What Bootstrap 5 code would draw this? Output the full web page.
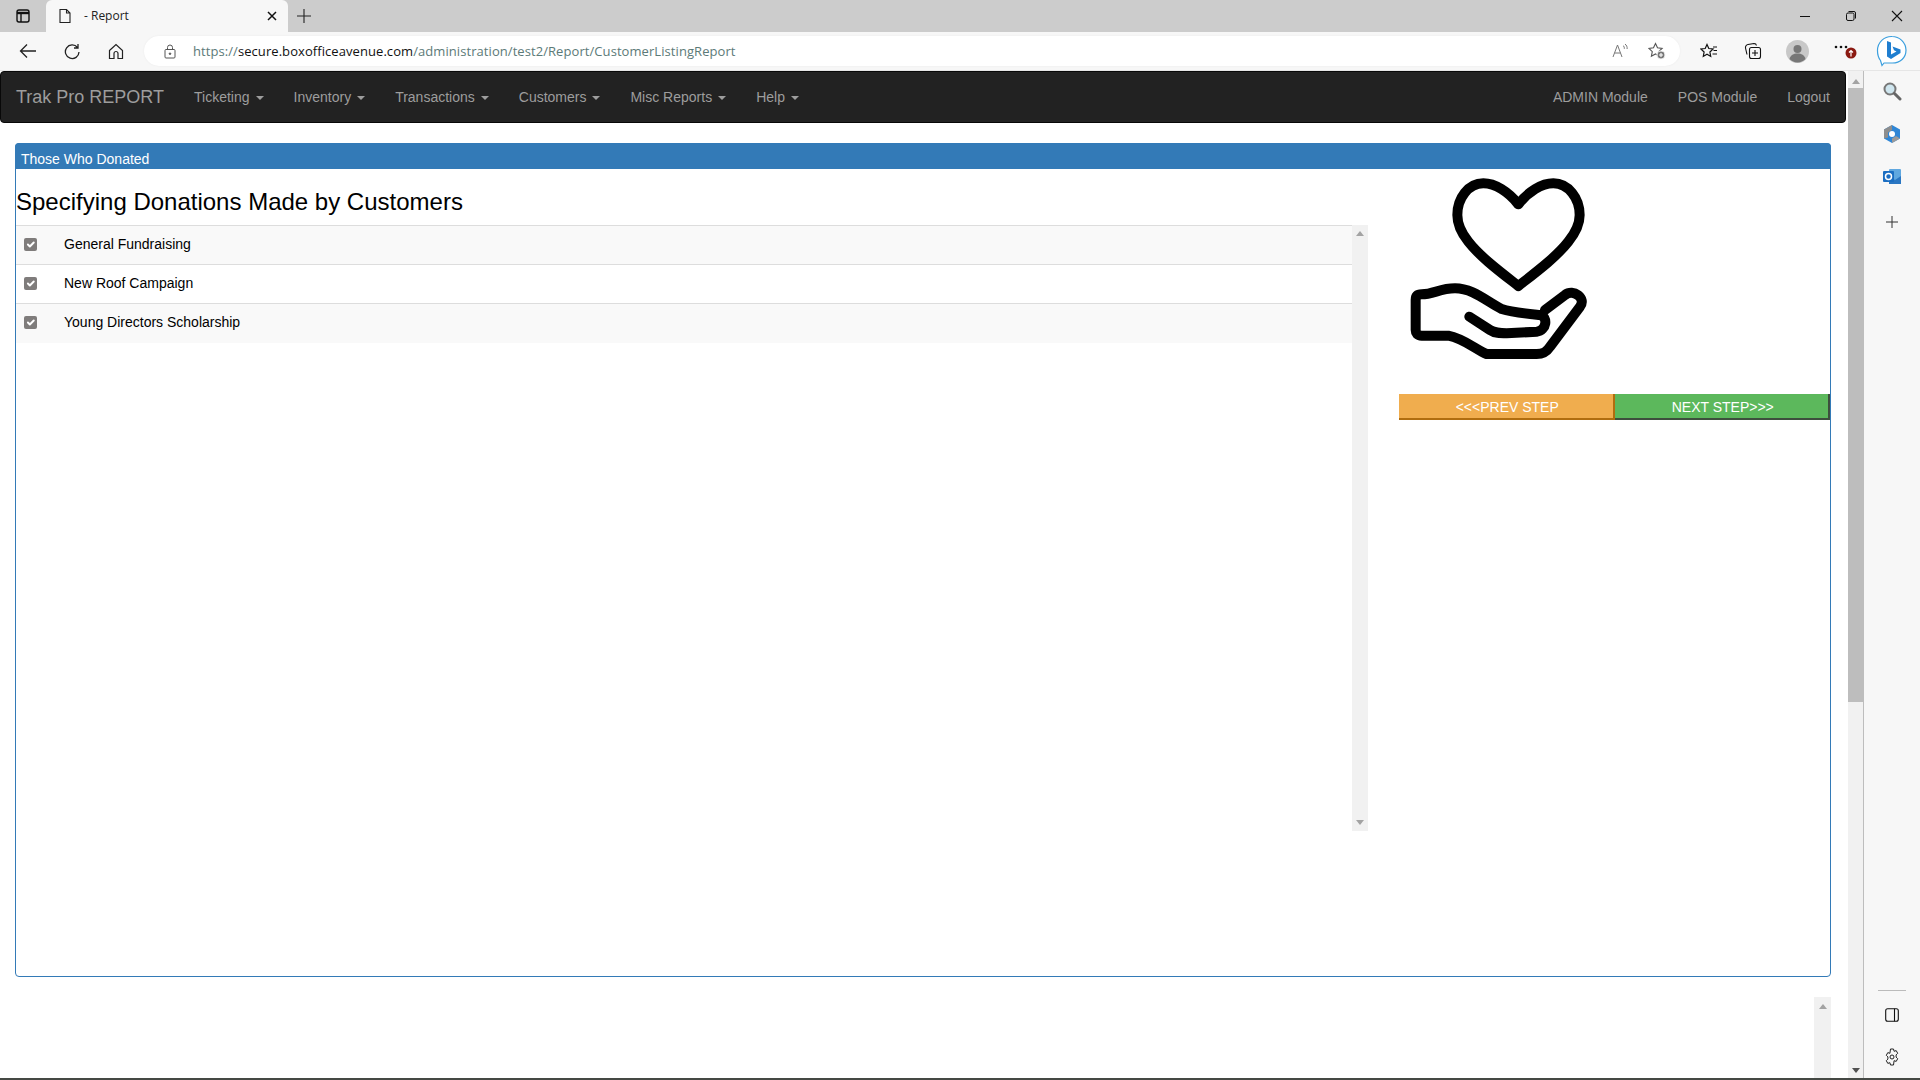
<!DOCTYPE html>
<html lang="en">
<head>
<meta charset="utf-8">
<title>- Report</title>
<link rel="stylesheet" href="https://cdn.jsdelivr.net/npm/bootstrap@5.3.0/dist/css/bootstrap.min.css">
<style>
html,body{height:100%;overflow:hidden;background:#fff}
body{font-family:"Liberation Sans",Arial,sans-serif;font-size:14px;color:#000;display:flex;flex-direction:column;height:1080px}
.chrome-font{font-family:"Open Sans","Noto Sans",sans-serif}
.titlebar{height:32px;background:#ccc;flex:none;display:flex;align-items:stretch}
.tabside{width:46px;display:flex;align-items:center;justify-content:center;flex:none}
.tabitem{width:242px;background:#f7f7f7;border-radius:6px 6px 0 0;display:flex;align-items:center;padding:0 11px 0 13px;font-size:12px;color:#222;flex:none}
.tabitem .tabname{margin-left:13px;flex:1}
.newtab{width:32px;display:flex;align-items:center;justify-content:center;flex:none}
.winbtn{width:46px;display:flex;align-items:center;justify-content:center;flex:none}
.winbtns{margin-left:auto;display:flex;padding-right:0}
.toolbar{height:39px;background:#f7f7f7;flex:none;display:flex;align-items:center;padding-left:6px;position:relative;border-bottom:1px solid #e6e6e6}
.tbtn{width:44px;height:30px;display:flex;align-items:center;justify-content:center;flex:none}
.urlbar{width:1536px;height:30px;margin-left:6px;background:#fff;border-radius:15px;display:flex;align-items:center;padding-left:20px;flex:none;box-shadow:0 0 2px #e9e9e9}
.urltext{margin-left:17px;padding-top:1px;font-size:13px;color:#5c7a78;white-space:nowrap;letter-spacing:.07px}
.urltext b{font-weight:400;color:#111}
.urlicons{margin-left:auto;display:flex;padding-right:5px}
.urlicons .tbtn{width:36px}
.righttools{display:flex;align-items:center;margin-left:7px}
.morebtn{margin-left:4px}
.bingbtn{margin-left:3px}
.bodyrow{flex:1;display:flex;min-height:0}
.pagearea{width:1848px;flex:none;display:flex;flex-direction:column;min-height:0}
.topnav{height:52px;margin-right:2px;background:#222;border:1px solid #080808;border-radius:4px;padding:0;flex:none}
.topnav .navbar-brand{font-size:18px;color:#9d9d9d;padding:0;margin:0 15px;line-height:20px}
.topnav.navbar-expand .navbar-nav .nav-link{color:#9d9d9d;font-size:14px;padding:15px;line-height:20px}
.topnav .dropdown-toggle::after{margin-left:6px;vertical-align:2px;border-top-width:4px;border-left-width:4px;border-right-width:4px}
.stepcard{margin:20px 17px 0 15px;height:834px;border:1px solid #337ab7;border-radius:4px;flex:none;display:flex;flex-direction:column;--bs-card-bg:#fff}
.stephead{background:#337ab7;color:#fff;height:26px;line-height:33px;padding-left:6px;margin:-1px -1px 0;border-radius:4px 4px 0 0;flex:none;font-size:14px;overflow:hidden}
.stepbody{flex:1;display:flex;min-height:0}
.leftcol{width:1352px;flex:none}
.stephead,.sheading,.gridrow{font-family:"Liberation Sans",Arial,sans-serif}
.sheading{font-size:24px;font-weight:400;line-height:26px;margin:20px 0 10px 0;color:#000;height:26px}
.gridwrap{display:flex;height:606px}
.gridtable{flex:1;margin:0;align-self:flex-start;--bs-table-bg:transparent;--bs-table-striped-bg:#f9f9f9;--bs-table-striped-color:#000}
.gridtable td{height:39px;padding:0 0 2px 0;border-top:1px solid #ddd;border-bottom:0;vertical-align:middle;font-size:14px;color:#000}
.checkcell{width:48px;padding-left:8px!important}
.gridtable td.checkcell .form-check-input{width:13px;height:13px;margin:0;display:block;background-color:#7f7c7b;border:0;border-radius:2px;box-shadow:none;background-size:13px}
.gridscroll{width:16px;background:#f1f1f1;flex:none;display:flex;flex-direction:column;justify-content:space-between;align-items:center;padding:6px 0}
.rightcol{flex:1;padding-left:31px;min-width:0}
.handicon{display:block;width:204px;height:200px}
.stepbtns{display:flex;margin-top:25px;height:26px}
.stepbtn{flex:1;border:0;border-radius:0;height:26px;padding:1px 0 0 3px;font-size:14px;line-height:24px;color:#fff;--bs-btn-color:#fff;--bs-btn-hover-color:#fff;--bs-btn-padding-y:0}
.stepprev{background:#f0ad4e;border-bottom:2px solid #b06d0f;border-right:2px solid #b06d0f}
.stepnext{background:#5cb85c;border-bottom:2px solid #3d4f3d;border-right:2px solid #3d4f3d}
.lowerstrip{flex:1;display:flex;justify-content:flex-end;padding:20px 17px 0 0;min-height:0}
.lowerscroll{width:17px;background:#f1f1f1;display:flex;justify-content:center;padding-top:7px}
.upar{width:0;height:0;border-left:4px solid transparent;border-right:4px solid transparent;border-bottom:5px solid #a3a3a3}
.dnar{width:0;height:0;border-left:4px solid transparent;border-right:4px solid transparent;border-top:5px solid #a3a3a3}
.mainscroll{width:16px;background:#f1f1f1;flex:none;display:flex;flex-direction:column;align-items:center;border-right:1px solid #bdbdbd;padding-top:8px}
.mainthumb{width:15px;height:614px;background:#bdbdbd;margin-top:4px}
.dnar.dark{margin-top:auto;margin-bottom:5px;border-top-color:#505050}
.sidebar{flex:1;background:#f7f7f7;display:flex;flex-direction:column;align-items:center;min-width:0}
.sidebtn{height:42.5px;width:100%;display:flex;align-items:center;justify-content:center;flex:none}
.sidefirst{margin-top:-1px}
.sideplus{margin-top:3px}
.sidedivider{width:28px;height:1px;background:#bbb;margin-top:auto;margin-bottom:3px}
.sidelast{margin-top:-1px}
.footline{height:2px;background:#454944;flex:none}
</style>
</head>
<body>
<div class="titlebar chrome-font">
  <div class="tabside">
    <svg width="16" height="16" viewBox="0 0 16 16" fill="none" stroke="#111" stroke-width="1.4"><rect x="2" y="2" width="12" height="12" rx="2"/><path d="M2 5h12" stroke-width="2.4"/><path d="M6 5v9"/></svg>
  </div>
  <div class="tabitem">
    <svg width="12" height="16" viewBox="0 0 12 16" fill="none" stroke="#222" stroke-width="1.1"><path d="M1 1.5h6.5L11 5v9.5H1zM7.500 1.500V5H11"/></svg>
    <span class="tabname">- Report</span>
    <svg width="10" height="10" viewBox="0 0 10 10" stroke="#111" stroke-width="1.500"><path d="M1 1l8 8M9 1l-8 8"/></svg>
  </div>
  <div class="newtab">
    <svg width="16" height="16" viewBox="0 0 16 16" stroke="#222" stroke-width="1.100"><path d="M8 1v14M1 8h14"/></svg>
  </div>
  <div class="winbtns">
    <div class="winbtn"><svg width="12" height="12" viewBox="0 0 12 12" stroke="#111"><path d="M1 6.500h10"/></svg></div>
    <div class="winbtn"><svg width="12" height="12" viewBox="0 0 12 12" fill="none" stroke="#111"><rect x="1.500" y="3" width="7.500" height="7.500" rx="1.500"/><path d="M3.500 1.500H9A1.500 1.500 0 0 1 10.500 3v5.500"/></svg></div>
    <div class="winbtn"><svg width="12" height="12" viewBox="0 0 12 12" stroke="#111" stroke-width="1.100"><path d="M1 1l10 10M11 1L1 11"/></svg></div>
  </div>
</div>
<div class="toolbar chrome-font">
  <div class="tbtn"><svg width="18" height="16" viewBox="0 0 18 16" fill="none" stroke="#222" stroke-width="1.300"><path d="M17 8H1.500M8 1.500L1.500 8 8 14.500"/></svg></div>
  <div class="tbtn"><svg width="16" height="17" viewBox="0 0 16 17" fill="none" stroke="#222" stroke-width="1.300"><path d="M13.500 4.500A6.800 6.800 0 1 0 15 9M14 1v4h-4"/></svg></div>
  <div class="tbtn"><svg width="16" height="17" viewBox="0 0 16 17" fill="none" stroke="#222" stroke-width="1.200"><path d="M1.500 7.500L8 1.500l6.500 6V15.500h-4.500v-5a2 2 0 0 0-4 0v5H1.500z"/></svg></div>
  <div class="urlbar">
    <svg width="12" height="15" viewBox="0 0 12 15" fill="none" stroke="#555" stroke-width="1"><rect x="1" y="5.500" width="10" height="8.500" rx="1"/><path d="M3.500 5.500V3.500a2.500 2.500 0 0 1 5 0v2"/><circle cx="6" cy="9.700" r=".8" fill="#555"/></svg>
    <span class="urltext">https://<b>secure.boxofficeavenue.com</b>/administration/test2/Report/CustomerListingReport</span>
    <div class="urlicons">
      <div class="tbtn"><svg width="18" height="16" viewBox="0 0 18 16" fill="none" stroke="#777" stroke-width="1"><path d="M1 14L5.500 2 10 14M2.700 10h5.600"/><path d="M11 2.500c1 .7 1.500 2 1.300 3.300M13 1c1.600 1.200 2.400 3 2.100 5"/></svg></div>
      <div class="tbtn"><svg width="18" height="18" viewBox="0 0 18 18" fill="none" stroke="#555" stroke-width="1.100"><path d="M7.500 1.500l2 4.300 4.600.6-3.400 3.200.9 4.600-4.100-2.300-4.100 2.300.9-4.600L.9 6.400l4.600-.6z"/><circle cx="13" cy="13" r="4" fill="#777" stroke="#f7f7f7"/><path d="M13 11v4M11 13h4" stroke="#fff"/></svg></div>
    </div>
  </div>
  <div class="righttools">
    <div class="tbtn"><svg width="18" height="16" viewBox="0 0 18 16" fill="none" stroke="#111" stroke-width="1.200"><path d="M7 1.500l1.800 4 4.300.5-3.200 3 .8 4.400L7 11.200l-3.700 2.200.8-4.400-3.200-3 4.300-.5z"/><path d="M13 4h4M13.500 7.500H17M12.500 11H17"/></svg></div>
    <div class="tbtn"><svg width="18" height="18" viewBox="0 0 18 18" fill="none" stroke="#111" stroke-width="1.100"><rect x="5.500" y="5.500" width="11" height="11" rx="2"/><path d="M11 8v6M8 11h6"/><path d="M3 12.500L1.500 6A3 3 0 0 1 4 2.500l6-1a2.500 2.500 0 0 1 2.500 2"/></svg></div>
    <div class="tbtn"><svg width="23" height="23" viewBox="0 0 23 23"><circle cx="11.500" cy="11.500" r="11.500" fill="#c8c8c8"/><circle cx="11.500" cy="9" r="4" fill="#777"/><path d="M3.500 19c1-4 4-5.500 8-5.500s7 1.500 8 5.500a11 11 0 0 1-16 0z" fill="#777"/></svg></div>
    <div class="tbtn morebtn"><svg width="24" height="16" viewBox="0 0 24 16"><circle cx="3" cy="4" r="1.300" fill="#111"/><circle cx="8" cy="4" r="1.300" fill="#111"/><circle cx="13" cy="4" r="1.300" fill="#111"/><circle cx="18" cy="10" r="5.500" fill="#8b1a12"/><path d="M18 13.500V7.500M16 9.500l2-2 2 2" fill="none" stroke="#fff" stroke-width="1.200"/></svg></div>
    <div class="tbtn bingbtn"><svg width="32" height="32" viewBox="0 0 32 32"><path d="M16 1.500a14 14 0 0 1 14 13.500c0 8-6 13-13.500 13H8l-2 2.500-1.500-5C2.500 23 1.500 19.500 1.500 15.500A14 14 0 0 1 16 1.500z" fill="#fff" stroke="#3b9fde" stroke-width="1.200"/><path d="M11 6l4 1.500v12l5.500-3-2.500-1.200-1.500-3.800 8 3v3.500L15 24l-4-2.500z" fill="#1f7ed0"/></svg></div>
  </div>
</div>
<div class="bodyrow">
  <div class="pagearea">
    <nav class="navbar navbar-expand navbar-dark topnav">
      <a class="navbar-brand" href="#">Trak Pro REPORT</a>
      <ul class="navbar-nav me-auto">
        <li class="nav-item dropdown"><a class="nav-link dropdown-toggle" href="#">Ticketing</a></li>
        <li class="nav-item dropdown"><a class="nav-link dropdown-toggle" href="#">Inventory</a></li>
        <li class="nav-item dropdown"><a class="nav-link dropdown-toggle" href="#">Transactions</a></li>
        <li class="nav-item dropdown"><a class="nav-link dropdown-toggle" href="#">Customers</a></li>
        <li class="nav-item dropdown"><a class="nav-link dropdown-toggle" href="#">Misc Reports</a></li>
        <li class="nav-item dropdown"><a class="nav-link dropdown-toggle" href="#">Help</a></li>
      </ul>
      <ul class="navbar-nav">
        <li class="nav-item"><a class="nav-link" href="#">ADMIN Module</a></li>
        <li class="nav-item"><a class="nav-link" href="#">POS Module</a></li>
        <li class="nav-item"><a class="nav-link" href="#">Logout</a></li>
      </ul>
    </nav>
    <div class="card stepcard">
      <div class="stephead">Those Who Donated</div>
      <div class="stepbody">
        <div class="leftcol">
          <h3 class="sheading">Specifying Donations Made by Customers</h3>
          <div class="gridwrap">
            <table class="table table-striped gridtable">
              <tbody>
                <tr class="gridrow"><td class="checkcell"><input class="form-check-input" type="checkbox" checked aria-label="General Fundraising"></td><td>General Fundraising</td></tr>
                <tr class="gridrow"><td class="checkcell"><input class="form-check-input" type="checkbox" checked aria-label="New Roof Campaign"></td><td>New Roof Campaign</td></tr>
                <tr class="gridrow"><td class="checkcell"><input class="form-check-input" type="checkbox" checked aria-label="Young Directors Scholarship"></td><td>Young Directors Scholarship</td></tr>
              </tbody>
            </table>
            <div class="gridscroll"><span class="upar"></span><span class="dnar"></span></div>
          </div>
        </div>
        <div class="rightcol">
          <svg class="handicon" viewBox="57 27 612 600" fill="none" stroke="#000" stroke-width="30" stroke-linejoin="round" stroke-linecap="round" aria-hidden="true">
            <path d="M415 133C385 95 345 70 310 70C265 70 232 115 232 165C232 195 245 220 265 245C300 290 360 335 415 378C470 335 530 290 565 245C585 220 599 195 599 165C599 115 565 70 520 70C485 70 445 95 415 133Z"/>
            <path d="M495 450L555 405C580 385 620 415 600 440L510 560C500 575 490 582 470 582L320 582C290 570 250 535 205 527L125 527C112 527 107 520 107 510L107 420C107 408 112 403 125 403C160 403 180 385 225 385C280 385 320 425 365 447C400 458 450 462 480 465C505 470 500 512 470 515L380 520C360 520 345 520 330 510L268 470"/>
          </svg>
          <div class="stepbtns">
            <button type="button" class="btn stepbtn stepprev">&lt;&lt;&lt;PREV STEP</button>
            <button type="button" class="btn stepbtn stepnext">NEXT STEP&gt;&gt;&gt;</button>
          </div>
        </div>
      </div>
    </div>
    <div class="lowerstrip"><div class="lowerscroll"><span class="upar"></span></div></div>
  </div>
  <div class="mainscroll">
    <span class="upar"></span>
    <div class="mainthumb"></div>
    <span class="dnar dark"></span>
  </div>
  <div class="sidebar">
    <div class="sidebtn sidefirst"><svg width="20" height="20" viewBox="0 0 20 20" fill="none"><circle cx="8" cy="8" r="5.500" fill="#cfe6ef" stroke="#777" stroke-width="2"/><path d="M12.500 12.500L18 18" stroke="#666" stroke-width="3" stroke-linecap="round"/></svg></div>
    <div class="sidebtn"><svg width="18" height="20" viewBox="0 0 18 20"><path d="M9 1l8 4.500v9L9 19l-8-4.500v-9z" fill="#2f86d6"/><path d="M1 5.500L9 1v5L5 8.500v5l-4 1z" fill="#8d8d8d"/><path d="M9 19l8-4.500-4-2.500-4 2.500z" fill="#9a9a9a"/><circle cx="9" cy="10" r="3" fill="#fff"/></svg></div>
    <div class="sidebtn"><svg width="18" height="17" viewBox="0 0 18 17"><rect x="6" y="1" width="12" height="15" rx="1" fill="#60a8e0"/><path d="M6 8l6 4 6-4v8H6z" fill="#2a76c2"/><rect x="0" y="3" width="11" height="11" rx="1" fill="#1b6ec2"/><circle cx="5.500" cy="8.500" r="3" fill="none" stroke="#fff" stroke-width="1.500"/></svg></div>
    <div class="sidebtn sideplus"><svg width="14" height="14" viewBox="0 0 14 14" stroke="#333"><path d="M7 1v12M1 7h12"/></svg></div>
    <div class="sidedivider"></div>
    <div class="sidebtn"><svg width="14" height="14" viewBox="0 0 14 14" fill="none" stroke="#111" stroke-width="1.100"><rect x=".700" y=".700" width="12.600" height="12.600" rx="2"/><path d="M9.500 .700v12.600"/></svg></div>
    <div class="sidebtn sidelast"><svg width="16" height="18" viewBox="0 0 16 18" fill="none" stroke="#222" stroke-width="1"><path d="M6.500 1h3l.6 2.300 2.100-.7 1.500 2.700-1.600 1.600v2.200l1.600 1.600-1.500 2.700-2.100-.7L9.500 17h-3l-.6-2.300-2.100.7-1.500-2.700 1.600-1.600V8.900L2.300 7.300l1.500-2.700 2.100.7z"/><circle cx="8" cy="9" r="2"/></svg></div>
  </div>
</div>
<div class="footline"></div>
</body>
</html>
